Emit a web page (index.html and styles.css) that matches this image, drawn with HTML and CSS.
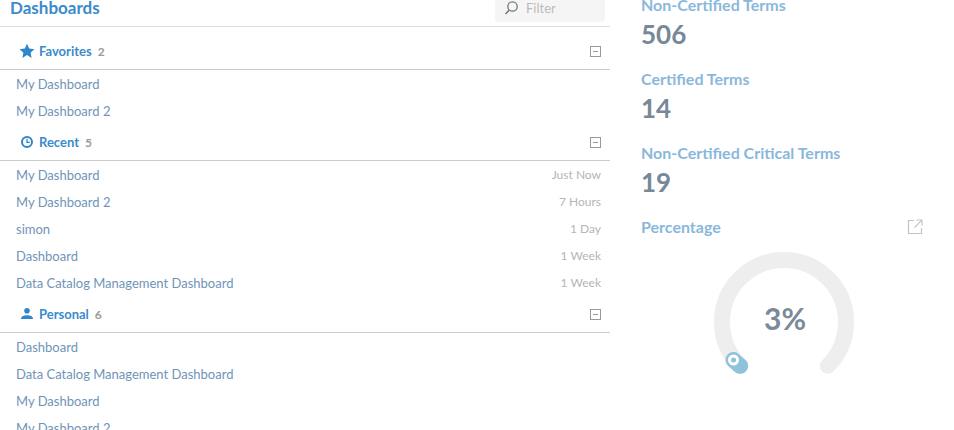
FILE: index.html
```html
<!DOCTYPE html>
<html>
<head><meta charset="utf-8"><link rel="stylesheet" href="styles.css"></head>
<body>
<div class="page">
  <main class="left">
    <header class="top">
      <h1>Dashboards</h1>
      <div class="filter"><svg width="16" height="16" viewBox="0 0 16 16"><circle cx="9.500" cy="6.500" r="4.700" fill="none" stroke="#777" stroke-width="1.300"/><path d="M6 10.200L2.500 14" stroke="#777" stroke-width="1.600"/></svg><span>Filter</span></div>
    </header>
    <section>
      <div class="sec-head"><svg class="ic" width="16" height="16" viewBox="0 0 16 16"><path fill="#2f86c8" d="M8 .8l2.200 4.700 5.200.7-3.800 3.600 1 5.100L8 12 3.400 14.900l1-5.100L.6 6.200l5.200-.7z"/></svg><b>Favorites</b><i>2</i><span class="tog"></span></div>
      <div class="row"><a>My Dashboard</a></div>
      <div class="row"><a>My Dashboard 2</a></div>
    </section>
    <section>
      <div class="sec-head"><svg class="ic" width="16" height="16" viewBox="0 0 16 16"><circle cx="8" cy="8" r="5" fill="none" stroke="#2f86c8" stroke-width="2"/><path d="M8 5v3.300h2.800" fill="none" stroke="#2f86c8" stroke-width="1.300"/></svg><b>Recent</b><i>5</i><span class="tog"></span></div>
      <div class="row"><a>My Dashboard</a><time>Just Now</time></div>
      <div class="row"><a>My Dashboard 2</a><time>7 Hours</time></div>
      <div class="row"><a>simon</a><time>1 Day</time></div>
      <div class="row"><a>Dashboard</a><time>1 Week</time></div>
      <div class="row"><a>Data Catalog Management Dashboard</a><time>1 Week</time></div>
    </section>
    <section>
      <div class="sec-head"><svg class="ic" width="16" height="16" viewBox="0 0 16 16"><circle cx="8" cy="4.800" r="2.800" fill="#2f86c8"/><path fill="#2f86c8" d="M2 13c0-2.800 3-3.800 6-3.800s6 1 6 3.800z"/></svg><b>Personal</b><i>6</i><span class="tog"></span></div>
      <div class="row"><a>Dashboard</a></div>
      <div class="row"><a>Data Catalog Management Dashboard</a></div>
      <div class="row"><a>My Dashboard</a></div>
      <div class="row"><a>My Dashboard 2</a></div>
    </section>
  </main>
  <aside class="right">
    <div class="stat"><h2>Non-Certified Terms</h2><p>506</p></div>
    <div class="stat"><h2>Certified Terms</h2><p>14</p></div>
    <div class="stat"><h2>Non-Certified Critical Terms</h2><p>19</p></div>
    <div class="pct-head"><h2>Percentage</h2><svg width="16" height="16" viewBox="0 0 16 16"><path fill="none" stroke="#c4c4c4" stroke-width="1.200" d="M7 1.500H1.500v13h13V9"/><path fill="none" stroke="#c4c4c4" stroke-width="1.200" d="M9.500 1h5.500v5.500M14.800 1.200L7.500 8.500"/></svg></div>
    <div class="gauge">
      <svg width="142" height="125" viewBox="0 0 142 125">
        <path d="M27.160 113.840A62 62 0 1 1 114.840 113.840" fill="none" stroke="#eee" stroke-width="16" stroke-linecap="round"/>
        <path d="M27.160 113.840A62 62 0 0 1 20.500 108" fill="none" stroke="#8fc3da" stroke-width="16" stroke-linecap="round"/>
        <circle cx="20.500" cy="108" r="7.500" fill="#8fc3da"/><circle cx="20.500" cy="108" r="5.500" fill="#fff"/><circle cx="20.500" cy="108" r="2.500" fill="#8fc3da"/>
      </svg>
      <span class="val">3%</span>
    </div>
  </aside>
</div>
</body>
</html>
```
FILE: styles.css
```css
*{box-sizing:border-box}
html,body{margin:0;padding:0;height:430px;overflow:hidden;background:#fff}
body{font-family:Lato,"Open Sans",sans-serif;font-size:13px;color:#6f94b8}
.page{display:flex;height:430px;overflow:hidden}
.left{width:610px;flex:none}
.top{height:27px;margin-bottom:6px;display:flex;justify-content:space-between;border-bottom:1px solid #ddd;padding-left:10px}
h1{margin:0;font-size:17px;font-weight:700;color:#3a8bcb;line-height:16px}
.filter{width:110px;height:22px;padding:0 0 6px 8px;margin-right:5px;background:#f5f5f5;border-radius:0 0 3px 3px;display:flex;align-items:center;gap:7px;color:#bbb}
.sec-head{height:37px;display:flex;align-items:center;border-bottom:1px solid #ccc;padding:0 9px 0 19px;font-size:13px}
.sec-head b{font-weight:700;color:#3a8bcb;margin-left:4px}
.sec-head i{font-style:normal;color:#999;font-weight:700;font-size:12px;margin-left:6px}
.tog{margin-left:auto;width:11px;height:11px;border:1px solid #999;position:relative}
.tog::after{content:"";position:absolute;left:2px;right:2px;top:4px;height:1px;background:#999}
.row{height:27px;display:flex;justify-content:space-between;align-items:center;padding:0 9px 0 16px}
time{font-size:12px;color:#b5b5b5}
.right{margin-left:31px;width:282px;margin-top:-6px}
.stat{height:74px}
h2{margin:0;font-size:16px;font-weight:700;color:#8ab8dc;line-height:22px}
.stat p{margin:0;font-size:26px;font-weight:700;color:#768899;line-height:36px}
.pct-head{display:flex;justify-content:space-between;align-items:center;height:22px}
.gauge{position:relative;width:142px;height:125px;margin:14px 0 0 72px}
.val{position:absolute;left:2px;right:0;top:48px;text-align:center;font-size:30px;line-height:36px;font-weight:700;color:#7a8a99}
```
